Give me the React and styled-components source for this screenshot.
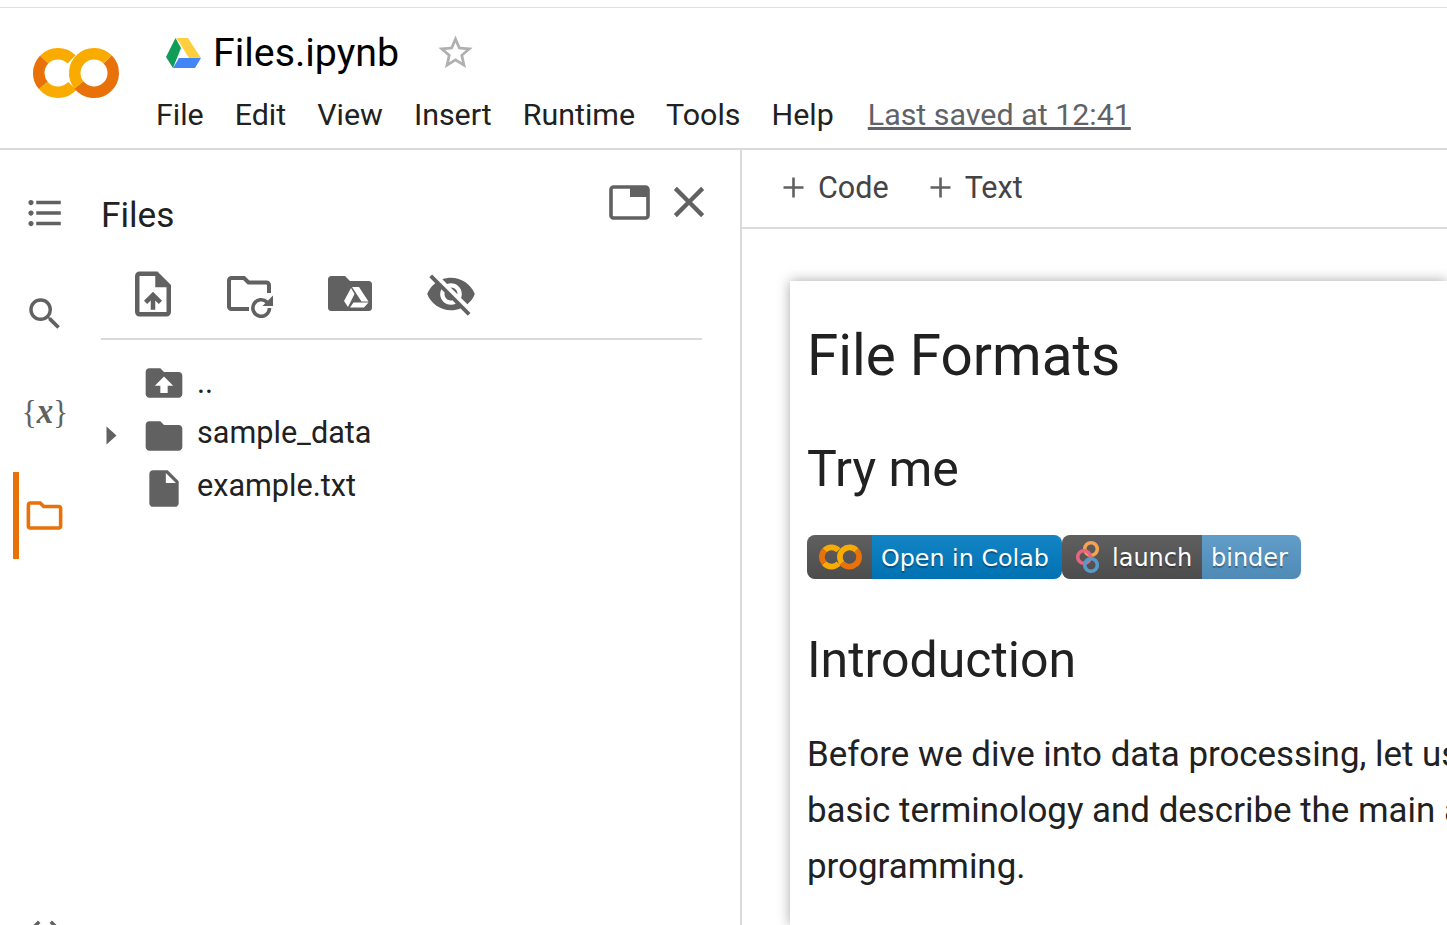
import React from "react";
import styled, { createGlobalStyle } from "styled-components";
import {
  MdFormatListBulleted, MdSearch, MdOutlineFolder, MdOutlineUploadFile, MdVisibilityOff,
  MdClose, MdStarBorder, MdFolder, MdInsertDriveFile, MdCode,
} from "react-icons/md";

const Global = createGlobalStyle`
  html, body { margin: 0; padding: 0; background: #fff; overflow: hidden; }
  body { font-family: Roboto, "Liberation Sans", sans-serif; color: #212121; }
  * { box-sizing: border-box; }
`;

const Page = styled.div`
  width: 1447px; height: 925px; overflow: hidden; display: flex; flex-direction: column;
  padding-top: 7px;
`;
const Header = styled.header`
  flex: none; height: 143px;
  border-top: 1px solid #dedede; border-bottom: 2px solid #dadada;
  display: flex; padding-left: 33px;
`;
const LogoSlot = styled.div`
  width: 123px; flex: none; padding-top: 39px;
`;
const TitleCol = styled.div`
  display: flex; flex-direction: column; padding-top: 20px;
`;
const TitleRow = styled.div`
  display: flex; align-items: center; padding-left: 10px; height: 50px;
`;
const DocName = styled.div`
  font-size: 39.3px; color: #000; margin-left: 11px; line-height: 50px;
`;
const Star = styled.div`
  margin-left: 36px; display: flex; color: #b0b0b0; margin-top: -1px;
`;
const Menu = styled.nav`
  display: flex; align-items: baseline; margin-top: 16px; gap: 31px;
`;
const MenuItem = styled.span`
  font-size: 30.4px; line-height: 42px; color: #212121;
`;
const Saved = styled.span`
  font-size: 30.4px; line-height: 42px; color: #5f6368; text-decoration: underline; margin-left: 3px;
`;
const Main = styled.div`
  flex: 1; min-height: 0; display: flex;
`;
const LeftPane = styled.aside`
  flex: none; width: 742px; border-right: 2px solid #dadada; display: flex;
`;
const Rail = styled.div`
  flex: none; width: 101px; padding: 13px 0 0 13px; display: flex; flex-direction: column; overflow: hidden;
`;
const RailItem = styled.div`
  flex: none; height: ${p => p.$active ? 87 : 86}px; margin: ${p => p.$active ? "9px 0 7px" : "7px 0"}; width: 62px;
  border-left: 6px solid ${p => p.$active ? "#e8710a" : "transparent"};
  display: flex; align-items: center; justify-content: center; color: ${p => p.$active ? "#e8710a" : "#616161"};
  padding-right: ${p => p.$active ? 6 : 4}px; padding-top: ${p => p.$nudge || 0}px; padding-bottom: ${p => p.$lift || 0}px;
`;
const VarIcon = styled.span`
  font-family: "Liberation Serif", serif; font-size: 31px; line-height: 40px; color: #616161; white-space: nowrap;
  transform: scaleY(1.08);
  i { font-size: 33px; font-weight: 700; }
`;
const RailSpacer = styled.div`
  flex: none; height: 315px;
`;
const FilesPanel = styled.div`
  flex: 1; min-width: 0; display: flex; flex-direction: column; padding-right: 38px;
`;
const PanelHead = styled.div`
  display: flex; align-items: flex-start; height: 100px; justify-content: space-between;
`;
const PanelTitle = styled.div`
  font-size: 35.2px; line-height: 40px; margin-top: 45px; color: #212121;
`;
const PanelActions = styled.div`
  display: flex; align-items: center; gap: 13px; margin-top: 26px; margin-right: -13px;
`;
const ToolRow = styled.div`
  height: 90px; border-bottom: 2px solid #dadada; display: flex; align-items: flex-start; color: #616161;
`;
const ToolSlot = styled.div`
  flex: none; width: ${p => p.$w}px; display: flex; justify-content: center;
  margin-top: ${p => p.$top}px; margin-left: ${p => p.$ml || 0}px;
`;
const Tree = styled.div`
  display: flex; flex-direction: column; padding-top: 17px;
`;
const TreeRow = styled.div`
  display: flex; align-items: center; height: ${p => p.$h}px; color: #616161;
`;
const Caret = styled.div`
  flex: none; width: 21px; margin-left: 5px; display: flex;
`;
const TreeIcon = styled.div`
  flex: none; width: 44px; margin-left: 15px; display: flex; justify-content: center;
`;
const TreeLabel = styled.span`
  font-size: 30.6px; line-height: 40px; color: #212121; margin-left: 11px;
  position: relative; top: ${p => p.$up || 0}px;
`;
const RightPane = styled.main`
  flex: 1; min-width: 0; display: flex; flex-direction: column; overflow: hidden;
`;
const NoteBar = styled.div`
  flex: none; height: 79px; border-bottom: 2px solid #dadada; display: flex; align-items: center;
  padding: 0 0 2px 41px; gap: 41px;
`;
const AddButton = styled.div`
  display: flex; align-items: center; gap: 14px; color: #444; font-size: 30.5px; line-height: 40px;
`;
const Card = styled.article`
  margin: 52px 0 0 48px; flex: 1; background: #fff; padding: 40px 0 0 17px;
  box-shadow: 0 0 12px rgba(0,0,0,.35); white-space: nowrap; overflow: hidden;
`;
const H1 = styled.h1`
  margin: 0; font-weight: 400; font-size: 56.6px; line-height: 70px; color: #212121;
`;
const H2 = styled.h2`
  margin: ${p => p.$top}px 0 0; font-weight: 400; font-size: 50px; line-height: 60px; color: #212121;
`;
const Badges = styled.div`
  display: flex; margin: 36px 0 0;
`;
const Badge = styled.div`
  display: flex; height: 44px; border-radius: 8px; overflow: hidden;
  font-family: "DejaVu Sans", Verdana, sans-serif; font-size: ${p => p.$fs}px; color: #fff;
  text-shadow: 0 2px 1px rgba(1,1,1,.3);
`;
const BadgePart = styled.div`
  display: flex; align-items: center; width: ${p => p.$w}px; padding-left: ${p => p.$pl}px;
  background: linear-gradient(to bottom, rgba(187,187,187,.1), rgba(0,0,0,.1)), ${p => p.$bg};
`;
const BadgeLabel = styled.span`
  margin: 2px 0 0 ${p => p.$ml || 0}px;
`;
const Para = styled.p`
  margin: 37px 0 0; font-size: 34.9px; line-height: 56px; color: #212121;
`;
const Line = styled.span`
  display: block;
`;

const pt = (cx, cy, r, a) => [cx + r * Math.cos(a * Math.PI / 180), cy + r * Math.sin(a * Math.PI / 180)];
const Arc = ({ cx, cy, from, to, color }) => {
  const [x1, y1] = pt(cx, cy, 19.25, from);
  const [x2, y2] = pt(cx, cy, 19.25, to);
  return <path d={`M${x1} ${y1}A19.25 19.25 0 ${to - from > 180 ? 1 : 0} 1 ${x2} ${y2}`} fill="none" stroke={color} strokeWidth="11.5" />;
};
const ColabLogo = ({ w }) => (
  <svg width={w} height={w * 52 / 88} viewBox="0 0 88 52" style={{ display: "block" }}>
    <Arc cx={25} cy={26} from={-136} to={-45} color="#f9ab00" />
    <Arc cx={25} cy={26} from={42} to={140} color="#f9ab00" />
    <Arc cx={25} cy={26} from={140} to={224} color="#e8710a" />
    <Arc cx={61} cy={26} from={-45} to={142} color="#e8710a" />
    <Arc cx={61} cy={26} from={142} to={315} color="#f9ab00" />
  </svg>
);
const DriveLogo = () => (
  <svg width="36" height="32" viewBox="0 0 36 32" style={{ display: "block" }}>
    <polygon points="10.500,1 22,1 35,21 23,21" fill="#ffcf3f" />
    <polygon points="9.500,1 15,11 7,31 0,20" fill="#0f9d58" />
    <polygon points="13,21 35,21 29,31 7,31" fill="#4285f4" />
  </svg>
);
const BinderLogo = () => (
  <svg width="28" height="34" viewBox="0 0 28 34" style={{ display: "block" }}>
    <circle cx="16" cy="9" r="6.3" fill="none" stroke="#f5a252" strokeWidth="3.6" />
    <circle cx="9" cy="17" r="6.3" fill="none" stroke="#e66581" strokeWidth="3.6" />
    <circle cx="16" cy="25" r="6.3" fill="none" stroke="#579aca" strokeWidth="3.6" />
  </svg>
);
const PopoutIcon = () => (
  <svg width="41" height="36" viewBox="0 0 41 36" style={{ display: "block" }}>
    <rect x="2" y="3" width="37" height="31" rx="2.5" fill="none" stroke="#616161" strokeWidth="3.6" />
    <rect x="21" y="3" width="18" height="10" fill="#616161" />
  </svg>
);
const Plus = () => (
  <svg width="21" height="21" viewBox="0 0 21 21" style={{ display: "block" }}>
    <path d="M10.500 0.500v20M0.500 10.500h20" stroke="#616161" strokeWidth="2.6" fill="none" />
  </svg>
);
const FolderRefresh = () => (
  <svg width="48" height="42" viewBox="0 0 48 42" style={{ display: "block" }}>
    <path d="M22 33H4.500A2.500 2.500 0 0 1 2 30.500V4.500A2.500 2.500 0 0 1 4.500 2H17l4.500 4.500H39.500A2.500 2.500 0 0 1 42 9V17" fill="none" stroke="#616161" strokeWidth="4" />
    <path d="M42.500 32a8.300 8.300 0 1 1-2.500-5.900" fill="none" stroke="#616161" strokeWidth="3.600" />
    <path d="M46 19.500v10.500H35.500z" fill="#616161" />
  </svg>
);
const FolderDrive = () => (
  <svg width="45" height="36" viewBox="0 0 45 36" style={{ display: "block" }}>
    <path d="M3.500 0H17l5 5h18.500a3.500 3.500 0 0 1 3.500 3.500v23a3.500 3.500 0 0 1-3.500 3.500H3.500A3.500 3.500 0 0 1 0 31.500v-28A3.500 3.500 0 0 1 3.500 0z" fill="#616161" />
    <path d="M24 11h7l9.500 14.500h-7zM23 12l3.500 6-6.500 13-4-6zM25.500 26.500H40.500L36 31.500H22z" fill="#fff" />
  </svg>
);
const FolderUp = () => (
  <svg width="44" height="44" viewBox="0 0 24 24" style={{ display: "block" }}>
    <path d="M20 6h-8l-2-2H4c-1.100 0-2 .9-2 2v12c0 1.100.9 2 2 2h16c1.100 0 2-.9 2-2V8c0-1.100-.9-2-2-2z" fill="#616161" />
    <path d="M12 8.500l5 5h-3v4h-4v-4H7z" fill="#fff" />
  </svg>
);
const CaretIcon = () => (
  <svg width="11" height="19" viewBox="0 0 11 19" style={{ display: "block" }}>
    <path d="M0.500 0.500L10.500 9.500 0.500 18.500z" fill="#616161" />
  </svg>
);

export default function App() {
  return (
    <Page>
      <Global />
      <Header>
        <LogoSlot><ColabLogo w={88} /></LogoSlot>
        <TitleCol>
          <TitleRow>
            <DriveLogo />
            <DocName>Files.ipynb</DocName>
            <Star><MdStarBorder size={41} /></Star>
          </TitleRow>
          <Menu>
            {["File", "Edit", "View", "Insert", "Runtime", "Tools", "Help"].map(m => <MenuItem key={m}>{m}</MenuItem>)}
            <Saved>Last saved at 12:41</Saved>
          </Menu>
        </TitleCol>
      </Header>
      <Main>
        <LeftPane>
          <Rail>
            <RailItem><MdFormatListBulleted size={42} /></RailItem>
            <RailItem $nudge={2}><MdSearch size={42} /></RailItem>
            <RailItem $lift={3}><VarIcon>{"{"}<i>x</i>{"}"}</VarIcon></RailItem>
            <RailItem $active><MdOutlineFolder size={43} /></RailItem>
            <RailSpacer />
            <RailItem><MdCode size={42} /></RailItem>
          </Rail>
          <FilesPanel>
            <PanelHead>
              <PanelTitle>Files</PanelTitle>
              <PanelActions>
                <PopoutIcon />
                <MdClose size={52} color="#616161" />
              </PanelActions>
            </PanelHead>
            <ToolRow>
              <ToolSlot $w={54} $top={17} $ml={25}><MdOutlineUploadFile size={54} /></ToolSlot>
              <ToolSlot $w={48} $top={26} $ml={47}><FolderRefresh /></ToolSlot>
              <ToolSlot $w={45} $top={26} $ml={53}><FolderDrive /></ToolSlot>
              <ToolSlot $w={52} $top={18} $ml={52}><MdVisibilityOff size={52} /></ToolSlot>
            </ToolRow>
            <Tree>
              <TreeRow $h={52}><Caret /><TreeIcon><FolderUp /></TreeIcon><TreeLabel>..</TreeLabel></TreeRow>
              <TreeRow $h={53}><Caret><CaretIcon /></Caret><TreeIcon><MdFolder size={44} /></TreeIcon><TreeLabel $up={-3}>sample_data</TreeLabel></TreeRow>
              <TreeRow $h={53}><Caret /><TreeIcon><MdInsertDriveFile size={45} /></TreeIcon><TreeLabel $up={-3}>example.txt</TreeLabel></TreeRow>
            </Tree>
          </FilesPanel>
        </LeftPane>
        <RightPane>
          <NoteBar>
            <AddButton><Plus />Code</AddButton>
            <AddButton><Plus />Text</AddButton>
          </NoteBar>
          <Card>
            <H1>File Formats</H1>
            <H2 $top={48}>Try me</H2>
            <Badges>
              <Badge $fs={23.8}>
                <BadgePart $w={65} $pl={12} $bg="#555"><ColabLogo w={44} /></BadgePart>
                <BadgePart $w={190} $pl={9} $bg="#007ec6"><BadgeLabel>Open in Colab</BadgeLabel></BadgePart>
              </Badge>
              <Badge $fs={24}>
                <BadgePart $w={140} $pl={13} $bg="#555"><BinderLogo /><BadgeLabel $ml={9}>launch</BadgeLabel></BadgePart>
                <BadgePart $w={99} $pl={9} $bg="#579aca"><BadgeLabel>binder</BadgeLabel></BadgePart>
              </Badge>
            </Badges>
            <H2 $top={51}>Introduction</H2>
            <Para>
              <Line>Before we dive into data processing, let us first</Line>
              <Line>basic terminology and describe the main approaches</Line>
              <Line>programming.</Line>
            </Para>
          </Card>
        </RightPane>
      </Main>
    </Page>
  );
}
